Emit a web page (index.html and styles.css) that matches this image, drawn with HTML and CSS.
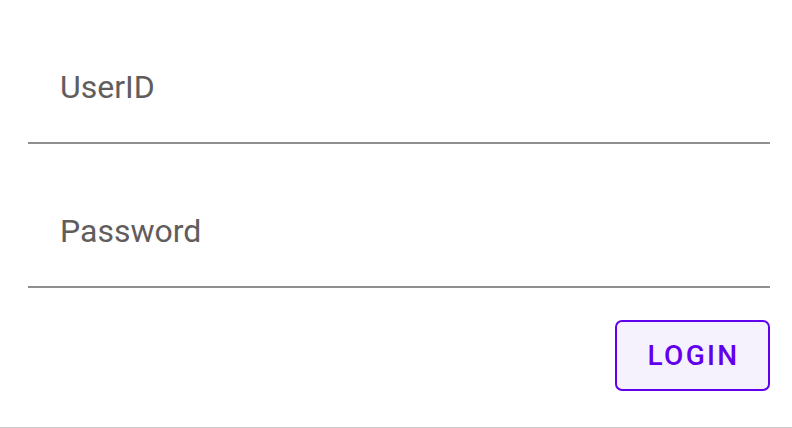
FILE: index.html
```html
<!DOCTYPE html>
<html>
<head>
<meta charset="utf-8">
<link rel="stylesheet" href="styles.css">
</head>
<body>
<div class="page">
  <form class="form">
    <label class="field"><span class="label">UserID</span></label>
    <label class="field"><span class="label">Password</span></label>
    <div class="actions">
      <button type="button" class="btn">LOGIN</button>
    </div>
  </form>
</div>
</body>
</html>
```
FILE: styles.css
```css
html, body {
  margin: 0;
  padding: 0;
  background: #ffffff;
}
.page {
  box-sizing: border-box;
  height: 428px;
  border-bottom: 1px solid #c8c8c8;
  padding: 31px 22px 0 28px;
  font-family: Roboto, "Liberation Sans", sans-serif;
}
.form {
  display: flex;
  flex-direction: column;
  gap: 31px;
}
.field {
  box-sizing: border-box;
  height: 113px;
  border-bottom: 2px solid #8f8f8f;
  padding-left: 32px;
  display: flex;
  align-items: center;
}
.label {
  font-size: 32px;
  color: #615d5d;
}
.actions {
  display: flex;
  justify-content: flex-end;
  margin-top: 1px;
}
.btn {
  box-sizing: border-box;
  height: 71px;
  width: 155px;
  border: 2px solid #6200ee;
  border-radius: 7px;
  background: #f6f2fd;
  color: #6200ee;
  font-family: Roboto, "Liberation Sans", sans-serif;
  font-weight: 500;
  font-size: 28px;
  letter-spacing: 2.3px;
  padding: 0;
  padding-left: 2px;
}
```
